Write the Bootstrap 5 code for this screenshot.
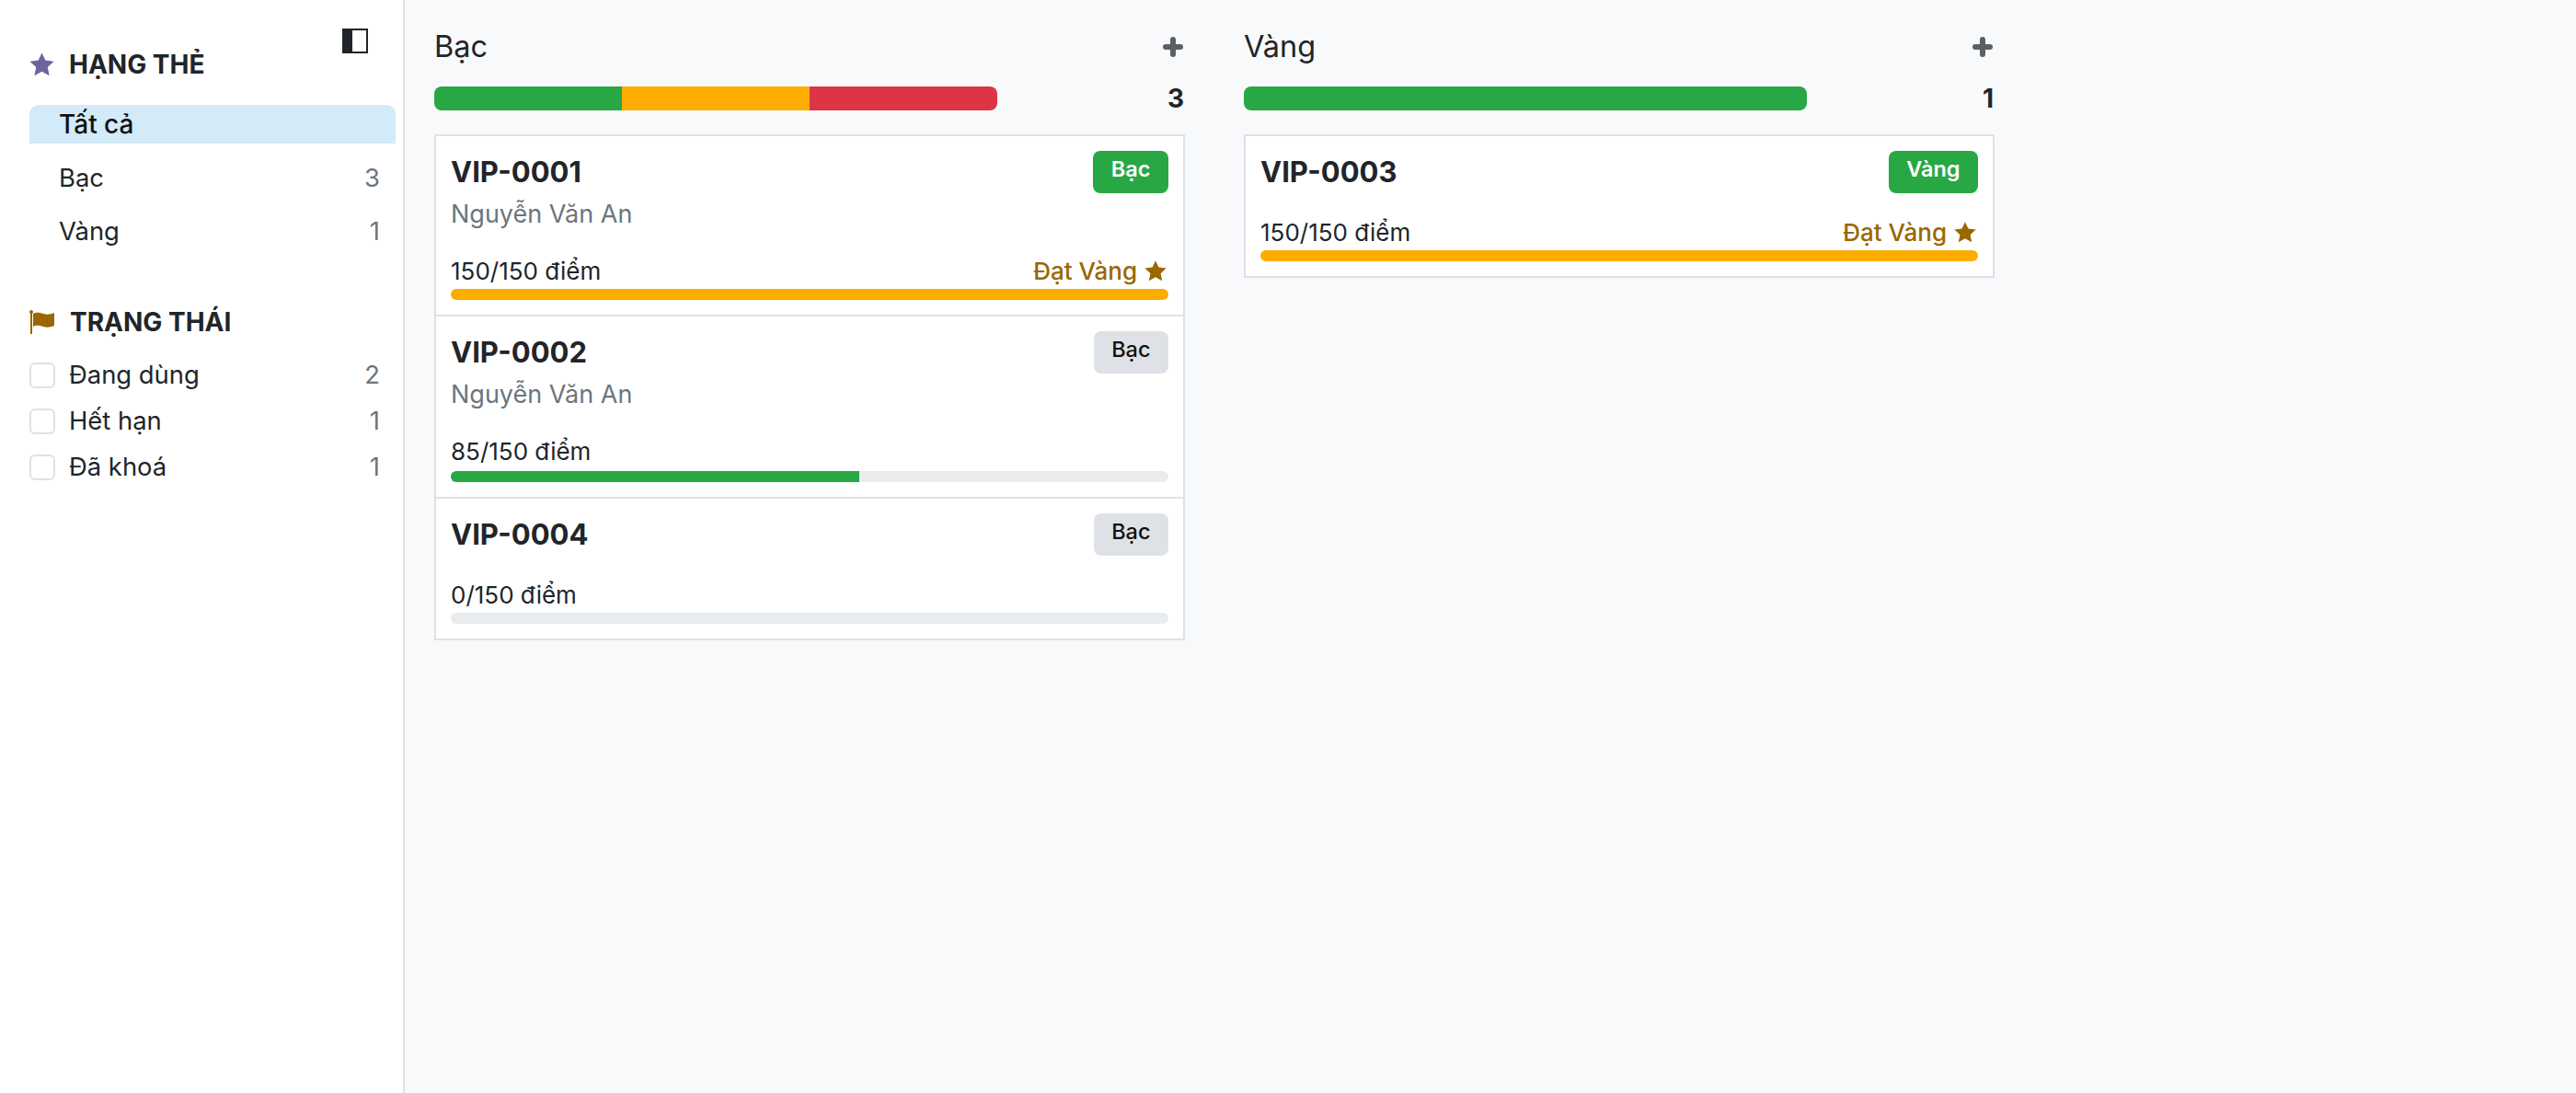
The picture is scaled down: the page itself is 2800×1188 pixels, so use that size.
<!DOCTYPE html>
<html lang="vi">
<head>
<meta charset="utf-8">
<title>Hạng thẻ</title>
<link rel="stylesheet" href="https://cdn.jsdelivr.net/npm/bootstrap@5.3.0/dist/css/bootstrap.min.css">
<style>
html,body{height:100%}
body{font-family:Inter,"Noto Sans",sans-serif;font-size:26px;color:#212529;background:#f8f9fa}
.app-shell{height:1188px}
.side-pane{width:440px;flex:none;background:#fff;border-right:2px solid #dee2e6;padding:0 8px 0 32px;font-size:27.4px}
.side-toggle{height:58px;padding:31px 30px 0 0}
.side-toggle svg,.side-head svg{display:block;flex:none}
.side-head{height:42px;font-size:28px;font-weight:700;gap:16px}
.head-star{margin-top:-1px}
.side-head-one{margin-top:-9px;margin-bottom:23px}
.side-head-two{margin-top:57px;margin-bottom:12px}
.side-row{padding:0 17px 0 32px;height:42px;margin-bottom:16px}
.side-row-plain{padding-top:2px}
.side-row-on{background:#d3eaf9;border-radius:10px 10px 0 0;color:#111;font-weight:500;font-size:28px}
.side-count{color:#6c757d}
.check-row{height:50px;gap:15px;padding-right:17px}
.check-box{width:28px;height:28px;border:2px solid #dee2e6;border-radius:6px;background:#fff;flex:none}
.board{padding-left:32px;gap:64px}
.lane{width:816px;flex:none}
.lane-top{height:44px;margin-top:29px;margin-bottom:-1px;font-size:32.5px;line-height:44px}
.lane-bar-row{margin-top:22px;height:26px;margin-bottom:26px}
.lane-bar{width:612px;height:26px;border-radius:8px;overflow:hidden}
.seg-green{background:#28a745}
.seg-amber{background:#ffac00}
.seg-red{background:#dc3545}
.lane-count{font-size:28px;font-weight:700;line-height:26px;margin-right:1px}
.plus-icon{display:block;margin-right:2px}
.ticket-list{--bs-list-group-border-width:2px;--bs-list-group-border-color:#dee2e6;--bs-list-group-border-radius:0;--bs-list-group-item-padding-x:16px;--bs-list-group-item-padding-y:16px}
.ticket-code{font-size:31px;font-weight:700;line-height:46px}
.tier-pill{height:46px;border-radius:8px;padding:0 19.5px;font-size:23.5px;font-weight:500;line-height:40px}
.tier-green{background:#28a745;color:#fff;font-weight:600}
.tier-grey{background:#dee2e6;color:#111}
.ticket-name{font-size:27px;line-height:42px;color:#6c757d;padding-top:2px;height:42px}
.score-row{margin-top:23px;height:39px;line-height:39px;font-size:26px;color:#212529}
.score-gap{padding-bottom:2px;height:41px}
.reach-note{color:#9a6700;font-weight:500;gap:8px;padding-right:2px}
.score-track{height:12px;background:#e9ecef;border-radius:6px;overflow:hidden}
.score-fill{height:100%}
</style>
</head>
<body>
<div class="d-flex app-shell">
  <aside class="side-pane">
    <div class="side-toggle d-flex justify-content-end">
      <svg width="28" height="27" viewBox="0 0 28 27"><rect x="1" y="1" width="26" height="25" fill="#fff" stroke="#212529" stroke-width="2"/><rect x="1" y="1" width="10" height="25" fill="#212529"/></svg>
    </div>
    <div class="side-head side-head-one d-flex align-items-center">
      <svg class="head-star" width="27" height="26" viewBox="0 0 24 23"><path fill="#71639e" d="M12 .3l3.4 7.3 8.2 1-6 5.6 1.6 8.1L12 18.3l-7.2 4 1.6-8.1-6-5.6 8.2-1z"/></svg>
      <span>HẠNG THẺ</span>
    </div>
    <div class="side-row side-row-on d-flex align-items-center">Tất cả</div>
    <div class="side-row side-row-plain d-flex align-items-center justify-content-between"><span>Bạc</span><span class="side-count">3</span></div>
    <div class="side-row side-row-plain d-flex align-items-center justify-content-between"><span>Vàng</span><span class="side-count">1</span></div>
    <div class="side-head side-head-two d-flex align-items-center">
      <svg width="28" height="26" viewBox="0 0 28 26"><rect x="1" y="1" width="2" height="25" fill="#9a6700"/><circle cx="2" cy="2" r="2" fill="#9a6700"/><path fill="#9a6700" d="M4 4c4-2 7-1 11 0s7 1 12-1v14c-5 2-8 2-12 1s-7-2-11 0z"/></svg>
      <span>TRẠNG THÁI</span>
    </div>
    <div class="check-row d-flex align-items-center"><span class="check-box"></span><span class="flex-grow-1">Đang dùng</span><span class="side-count">2</span></div>
    <div class="check-row d-flex align-items-center"><span class="check-box"></span><span class="flex-grow-1">Hết hạn</span><span class="side-count">1</span></div>
    <div class="check-row d-flex align-items-center"><span class="check-box"></span><span class="flex-grow-1">Đã khoá</span><span class="side-count">1</span></div>
  </aside>
  <main class="board d-flex flex-grow-1 align-items-start">
    <section class="lane">
      <div class="lane-top d-flex justify-content-between align-items-center"><span>Bạc</span>
        <svg class="plus-icon" width="22" height="22" viewBox="0 0 22 22"><path stroke="#5c5f62" stroke-width="6" stroke-linecap="round" d="M11 3v16M3 11h16"/></svg></div>
      <div class="lane-bar-row d-flex justify-content-between align-items-center">
        <div class="lane-bar d-flex"><div class="seg-green flex-fill"></div><div class="seg-amber flex-fill"></div><div class="seg-red flex-fill"></div></div>
        <span class="lane-count">3</span>
      </div>
      <div class="list-group ticket-list">
        <div class="list-group-item">
          <div class="d-flex justify-content-between"><span class="ticket-code">VIP-0001</span><span class="tier-pill tier-green">Bạc</span></div>
          <div class="ticket-name">Nguyễn Văn An</div>
          <div class="score-row d-flex justify-content-between"><span>150/150 điểm</span><span class="reach-note d-flex align-items-center">Đạt Vàng <svg width="24" height="23" viewBox="0 0 24 23"><path fill="#9a6700" d="M12 .3l3.4 7.3 8.2 1-6 5.6 1.6 8.1L12 18.3l-7.2 4 1.6-8.1-6-5.6 8.2-1z"/></svg></span></div>
          <div class="score-track"><div class="score-fill seg-amber w-100"></div></div>
        </div>
        <div class="list-group-item">
          <div class="d-flex justify-content-between"><span class="ticket-code">VIP-0002</span><span class="tier-pill tier-grey">Bạc</span></div>
          <div class="ticket-name">Nguyễn Văn An</div>
          <div class="score-row score-gap d-flex justify-content-between"><span>85/150 điểm</span></div>
          <div class="score-track"><div class="score-fill seg-green" style="width:56.9%"></div></div>
        </div>
        <div class="list-group-item">
          <div class="d-flex justify-content-between"><span class="ticket-code">VIP-0004</span><span class="tier-pill tier-grey">Bạc</span></div>
          <div class="score-row d-flex justify-content-between"><span>0/150 điểm</span></div>
          <div class="score-track"><div class="score-fill seg-green" style="width:0%"></div></div>
        </div>
      </div>
    </section>
    <section class="lane">
      <div class="lane-top d-flex justify-content-between align-items-center"><span>Vàng</span>
        <svg class="plus-icon" width="22" height="22" viewBox="0 0 22 22"><path stroke="#5c5f62" stroke-width="6" stroke-linecap="round" d="M11 3v16M3 11h16"/></svg></div>
      <div class="lane-bar-row d-flex justify-content-between align-items-center">
        <div class="lane-bar d-flex"><div class="seg-green flex-fill"></div></div>
        <span class="lane-count">1</span>
      </div>
      <div class="list-group ticket-list">
        <div class="list-group-item">
          <div class="d-flex justify-content-between"><span class="ticket-code">VIP-0003</span><span class="tier-pill tier-green">Vàng</span></div>
          <div class="score-row d-flex justify-content-between"><span>150/150 điểm</span><span class="reach-note d-flex align-items-center">Đạt Vàng <svg width="24" height="23" viewBox="0 0 24 23"><path fill="#9a6700" d="M12 .3l3.4 7.3 8.2 1-6 5.6 1.6 8.1L12 18.3l-7.2 4 1.6-8.1-6-5.6 8.2-1z"/></svg></span></div>
          <div class="score-track"><div class="score-fill seg-amber w-100"></div></div>
        </div>
      </div>
    </section>
  </main>
</div>
<script src="https://cdn.jsdelivr.net/npm/bootstrap@5.3.0/dist/js/bootstrap.bundle.min.js"></script>
</body>
</html>
